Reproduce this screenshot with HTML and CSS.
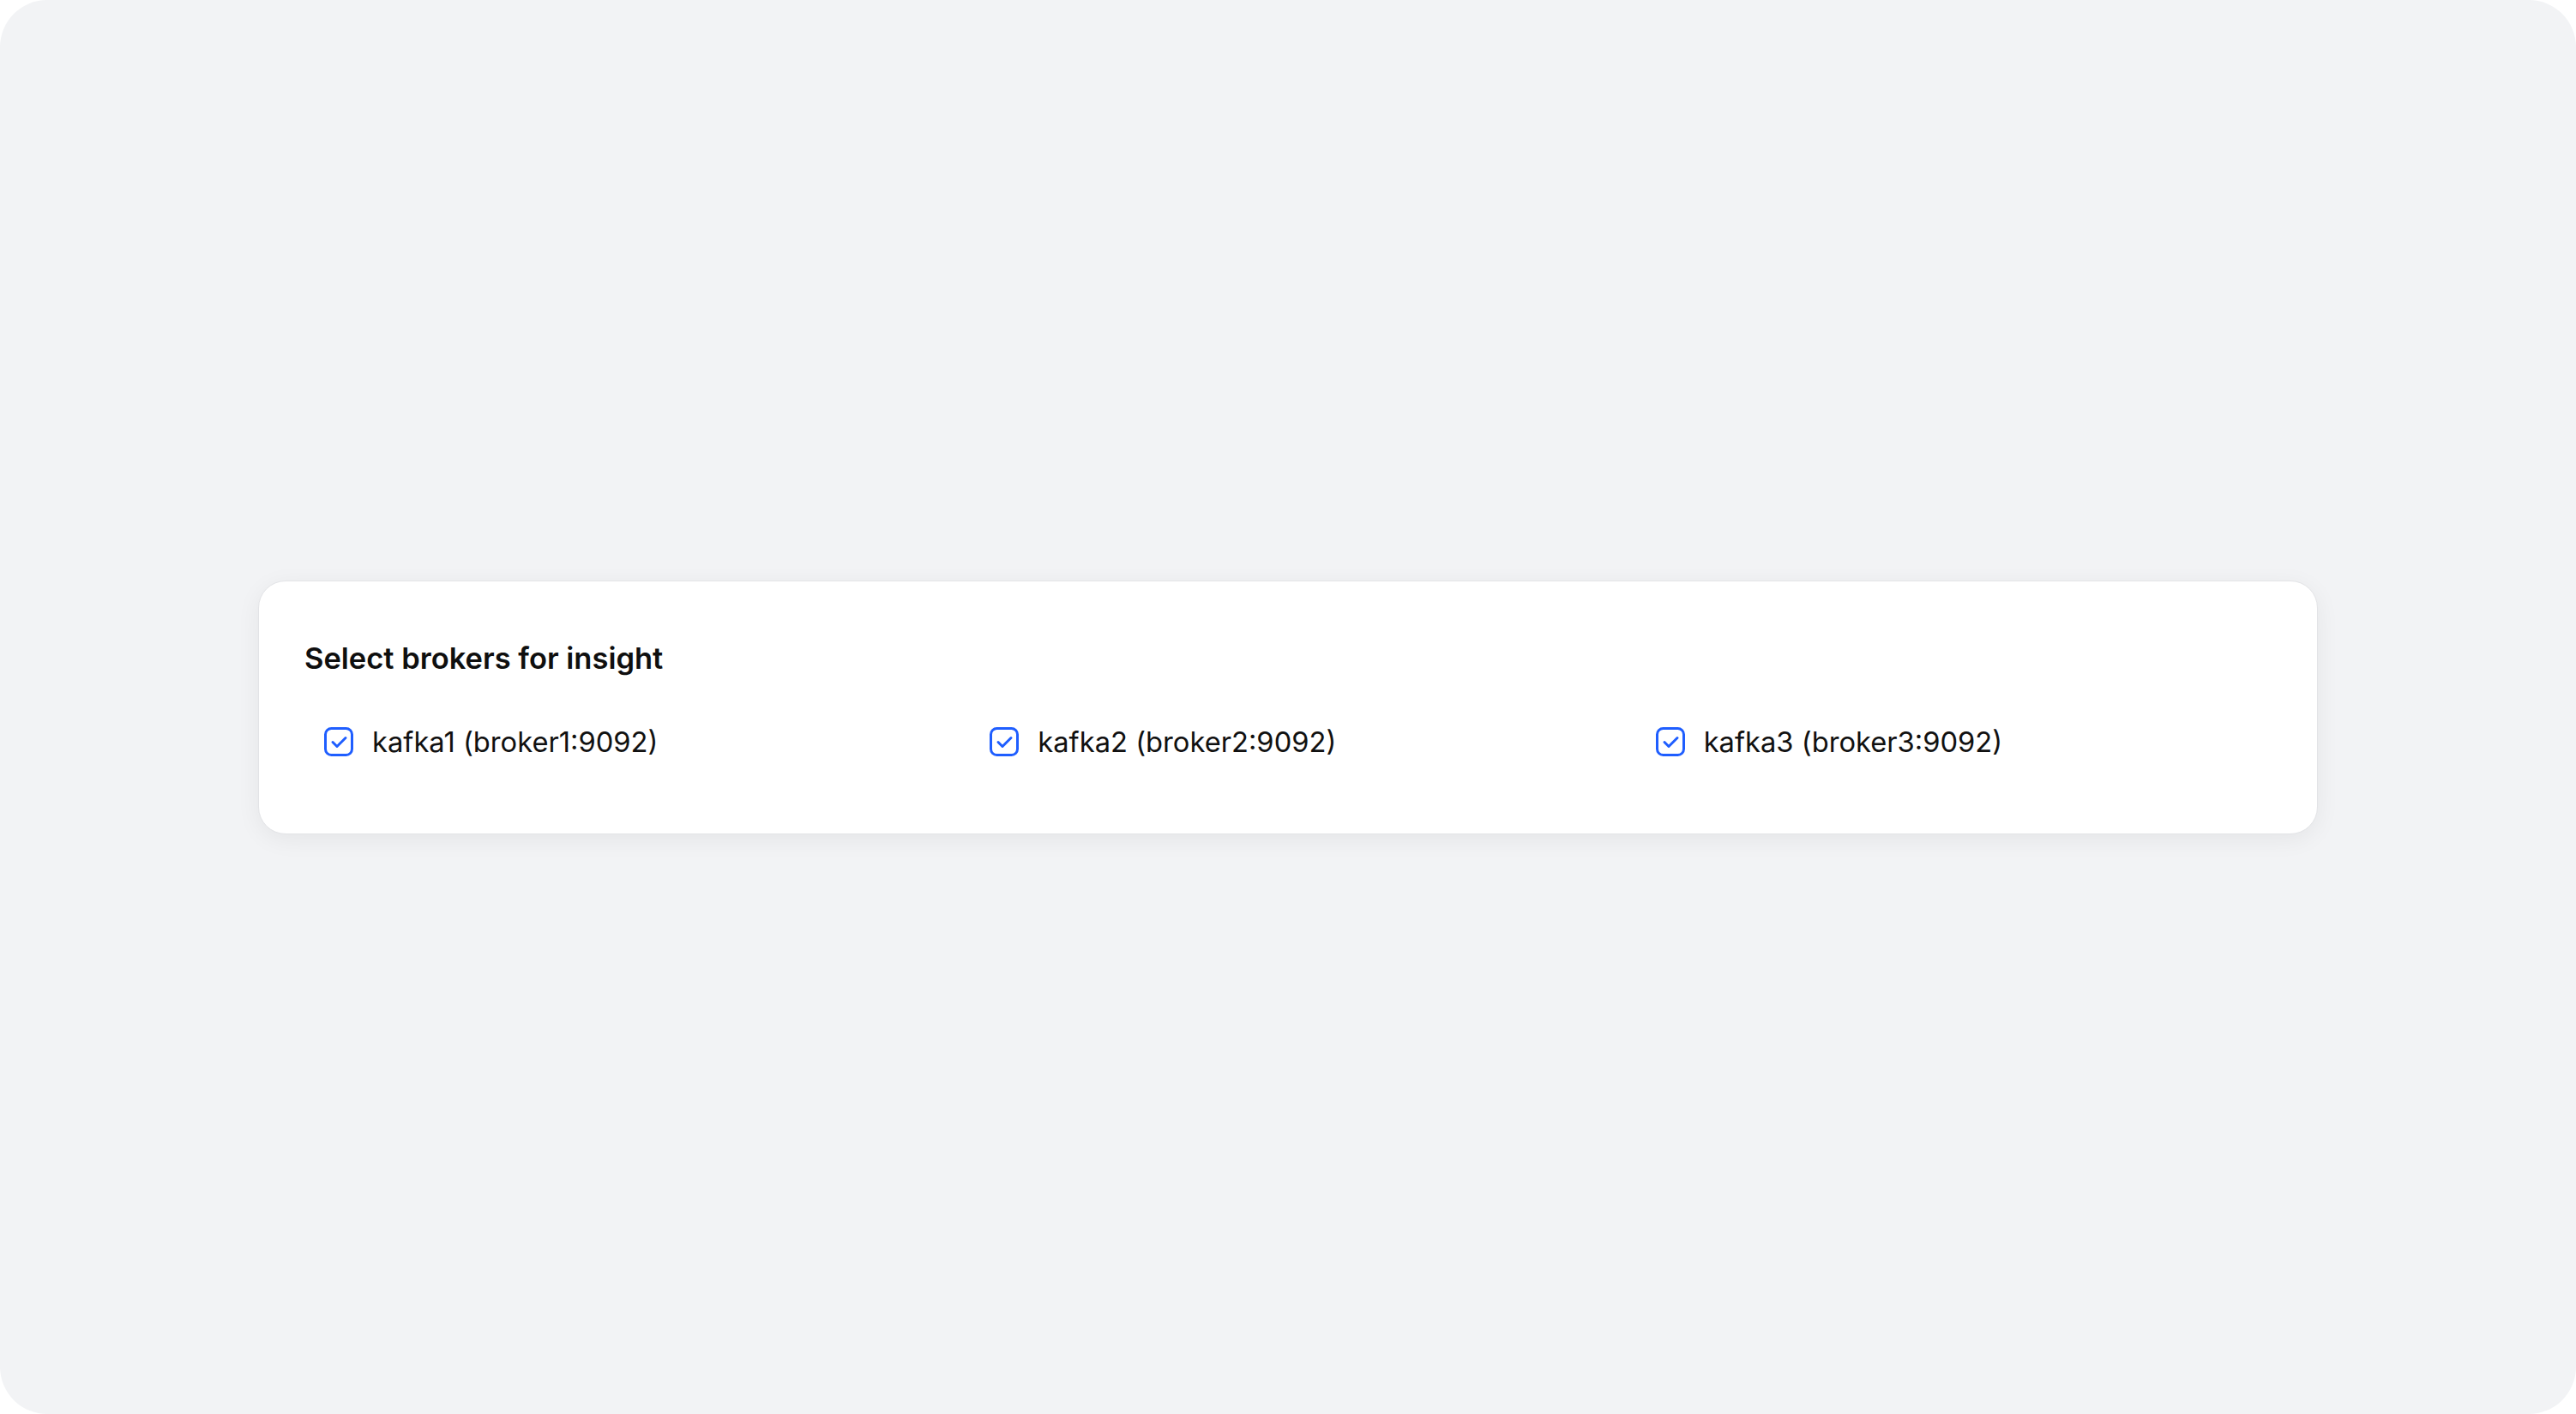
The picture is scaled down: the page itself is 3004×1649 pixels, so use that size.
FILE: index.html
```html
<!DOCTYPE html>
<html lang="en">

<head>
    <meta charset="UTF-8">
    <meta name="viewport" content="width=device-width, initial-scale=1.0">
    <title>Broker insight</title>
    <link rel="stylesheet" href="styles.css">
</head>

<body>
    <div class="frame">
        <div class="panel">
            <h2 class="panel-title">Select brokers for insight</h2>
            <div class="broker-list">
                <label class="broker">
                    <span class="check">
                        <svg viewBox="0 0 34 34" width="34" height="34">
                            <rect x="1.5" y="1.5" width="31" height="31" rx="7" fill="none" stroke="#1f5eff" stroke-width="3" />
                            <path d="M10 17.5 L15 22.5 L25 12.5" fill="none" stroke="#1f5eff" stroke-width="3" stroke-linecap="round" stroke-linejoin="round" />
                        </svg>
                    </span>
                    <span class="broker-name">kafka1 (broker1:9092)</span>
                </label>
                <label class="broker">
                    <span class="check">
                        <svg viewBox="0 0 34 34" width="34" height="34">
                            <rect x="1.5" y="1.5" width="31" height="31" rx="7" fill="none" stroke="#1f5eff" stroke-width="3" />
                            <path d="M10 17.5 L15 22.5 L25 12.5" fill="none" stroke="#1f5eff" stroke-width="3" stroke-linecap="round" stroke-linejoin="round" />
                        </svg>
                    </span>
                    <span class="broker-name">kafka2 (broker2:9092)</span>
                </label>
                <label class="broker">
                    <span class="check">
                        <svg viewBox="0 0 34 34" width="34" height="34">
                            <rect x="1.5" y="1.5" width="31" height="31" rx="7" fill="none" stroke="#1f5eff" stroke-width="3" />
                            <path d="M10 17.5 L15 22.5 L25 12.5" fill="none" stroke="#1f5eff" stroke-width="3" stroke-linecap="round" stroke-linejoin="round" />
                        </svg>
                    </span>
                    <span class="broker-name">kafka3 (broker3:9092)</span>
                </label>
            </div>
        </div>
    </div>
</body>

</html>
```

FILE: styles.css
```css
* {
    box-sizing: border-box;
}

html,
body {
    height: 100%;
}

body {
    margin: 0;
    background: #ffffff;
    font-family: Inter, "Liberation Sans", sans-serif;
    color: #141414;
}

.frame {
    height: 100%;
    border-radius: 55px;
    background: #f2f3f5;
    display: flex;
    align-items: center;
    justify-content: center;
}

.panel {
    width: 2402px;
    height: 296px;
    background: #ffffff;
    border: 1px solid #e3e4e7;
    border-radius: 32px;
    box-shadow: 0 6px 28px rgba(0, 0, 0, 0.06);
    padding: 70px 53px 0;
}

.panel-title {
    margin: 0;
    font-size: 34.5px;
    line-height: 40px;
    font-weight: 600;
    color: #0f0f0f;
}

.broker-list {
    margin-top: 38px;
    display: grid;
    grid-template-columns: repeat(3, 1fr);
    column-gap: 35px;
}

.broker {
    display: flex;
    align-items: center;
    gap: 22px;
    padding: 20px 23px;
    cursor: pointer;
}

.check {
    display: flex;
    width: 34px;
    height: 34px;
}

.broker-name {
    font-size: 32.7px;
    line-height: 38px;
    color: #111111;
}
```
